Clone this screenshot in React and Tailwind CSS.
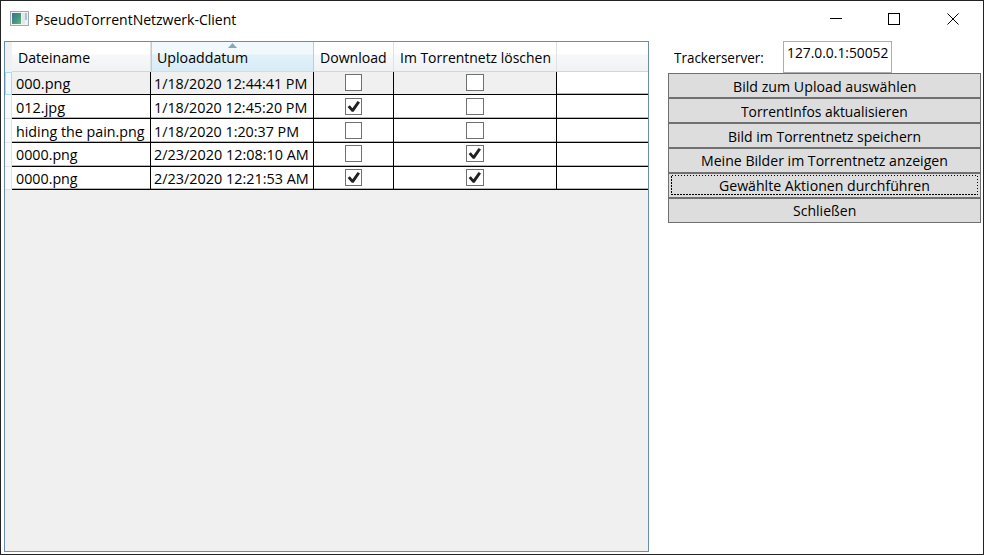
import { useLayoutEffect, useRef, useState } from "react";
import clsx from "clsx";

// Single-line text condensed horizontally to fill a given width.
function Label({ children, width, className }) {
  const ref = useRef(null);
  const [scale, setScale] = useState(1);
  useLayoutEffect(() => {
    setScale(width / ref.current.offsetWidth);
  }, [children, width]);
  return (
    <span className={clsx("block shrink-0 text-[14.5px] leading-5", className)} style={{ width }}>
      <span
        ref={ref}
        className="inline-block origin-left whitespace-pre"
        style={{ transform: `scaleX(${scale})` }}
      >
        {children}
      </span>
    </span>
  );
}

function CheckBox({ checked, wide }) {
  return (
    <span
      className={clsx(
        "block shrink-0 border border-[#707070] bg-white",
        wide ? "w-[18px]" : "w-[17px]",
        "h-[17px]"
      )}
    >
      {checked && (
        <svg viewBox="0 0 15 15" className="block h-[15px] w-[15px]">
          <path d="M1.6 7.9 L3.8 6.3 L6.4 9.2 L11.6 2 L14 3.5 L7.6 12.8 L5.8 12.8 Z" fill="#212121" />
        </svg>
      )}
    </span>
  );
}

const rows = [
  { name: "000.png", nw: 54, date: "1/18/2020 12:44:41 PM", dw: 153, dl: false, del: false, h: "h-[23px]", pad: "pt-[2px]" },
  { name: "012.jpg", nw: 49, date: "1/18/2020 12:45:20 PM", dw: 153, dl: true, del: false, h: "h-6", pad: "pt-[3px]" },
  { name: "hiding the pain.png", nw: 129, date: "1/18/2020 1:20:37 PM", dw: 145, dl: false, del: false, h: "h-6", pad: "pt-[3px]" },
  { name: "0000.png", nw: 62, date: "2/23/2020 12:08:10 AM", dw: 155, dl: false, del: true, h: "h-6", pad: "pt-[2px]" },
  { name: "0000.png", nw: 62, date: "2/23/2020 12:21:53 AM", dw: 155, dl: true, del: true, h: "h-[23px]", pad: "pt-[2px]" },
];

const buttons = [
  ["Bild zum Upload auswählen", 183],
  ["TorrentInfos aktualisieren", 167],
  ["Bild im Torrentnetz speichern", 193],
  ["Meine Bilder im Torrentnetz anzeigen", 247],
  ["Gewählte Aktionen durchführen", 211],
  ["Schließen", 63],
];

const headCell = "h-full border-r border-[#dfe1e4] pt-[6px] pl-[6px]";

function TitleBar() {
  return (
    <header className="flex h-[40px] items-start">
      <svg className="mt-[10px] ml-[9px] h-4 w-[19px]" viewBox="0 0 19 16">
        <defs>
          <linearGradient id="screen" x1="0" y1="0" x2="1" y2="1">
            <stop offset="0" stopColor="#3d6f9b" />
            <stop offset=".55" stopColor="#43967c" />
            <stop offset="1" stopColor="#63b77c" />
          </linearGradient>
        </defs>
        <rect x=".5" y=".5" width="18" height="14" fill="#f2f2f2" stroke="#a5a9ad" />
        <rect x="2" y="2" width="9" height="11" fill="url(#screen)" />
        <rect x="12" y="2" width="3" height="11" fill="#e3e7ea" />
        <rect x="15" y="2" width="2" height="7" fill="#a9c3cf" />
      </svg>
      <Label width={201} className="mt-[9px] ml-[6px]">PseudoTorrentNetzwerk-Client</Label>
      <svg className="mt-[11px] mr-[23px] ml-auto h-[14px] w-[130px]" viewBox="0 0 130 14" fill="none" stroke="black">
        <path d="M0 6.5H12" />
        <rect x="58.5" y="1.5" width="11" height="11" />
        <path d="M117.5 1.5l11 11M128.5 1.5l-11 11" />
      </svg>
    </header>
  );
}

function FileGrid() {
  return (
    <section className="flex h-[511px] w-[645px] flex-col border border-[#688caf] bg-[#f0f0f0]">
      <div className="flex h-[30px] shrink-0">
        <div className="w-[7px] bg-[#f1f1f2]" />
        <div className="flex flex-1 border-b border-[#d5d5d5] bg-linear-to-b from-white from-40% via-[#f7f8fa] via-45% to-[#f1f2f4]">
          <div className={clsx(headCell, "w-[139px]")}>
            <Label width={72}>Dateiname</Label>
          </div>
          <div className="relative h-[30px] w-[163px] border-x border-b border-x-[#96d9f9] border-b-[#c9dfe9] bg-linear-to-b from-[#f2f9fc] from-40% via-[#e1f1f9] via-45% to-[#d8ecf6] pt-[6px] pl-[5px]">
            <Label width={91}>Uploaddatum</Label>
            <svg className="absolute top-[1px] left-[76px] h-[5px] w-[9px]" viewBox="0 0 9 5">
              <path d="M4.5 0L9 5H0Z" fill="#86a9b9" />
            </svg>
          </div>
          <div className={clsx(headCell, "w-[80px]")}>
            <Label width={67}>Download</Label>
          </div>
          <div className={clsx(headCell, "w-[163px]")}>
            <Label width={151}>Im Torrentnetz löschen</Label>
          </div>
        </div>
      </div>
      {rows.map((r, i) => {
        const cell = clsx("flex h-full border-r border-black", i === 0 && "bg-[#f0f0f0]");
        return (
          <div key={i} className={clsx("flex shrink-0 bg-white", r.h)}>
            <div
              className={clsx(
                "w-[7px] border-r border-b",
                i === 0 ? "border border-[#a5dcf5] bg-[#f3fafd]" : "border-[#e4e4e4] bg-[#fafafa]"
              )}
            />
            <div className="flex flex-1 border-b border-black shadow-[inset_0_-1px_0_#b4b4b4]">
              <div className={clsx(cell, "w-[139px] pl-[4px]", r.pad)}>
                <Label width={r.nw}>{r.name}</Label>
              </div>
              <div className={clsx(cell, "w-[163px] pl-[3px]", r.pad)}>
                <Label width={r.dw}>{r.date}</Label>
              </div>
              <div className={clsx(cell, "w-[80px] pl-[31px]", r.pad)}>
                <CheckBox checked={r.dl} />
              </div>
              <div className={clsx(cell, "w-[163px] pl-[72px]", r.pad)}>
                <CheckBox checked={r.del} wide />
              </div>
            </div>
          </div>
        );
      })}
    </section>
  );
}

function SidePanel() {
  return (
    <aside className="ml-[19px] w-[313px]">
      <div className="flex h-8">
        <Label width={90} className="mt-[7px] ml-[6px]">Trackerserver:</Label>
        <div className="ml-auto mr-[89px] h-8 w-[109px] border border-[#abadb3] bg-white pt-px pl-[3px]">
          <Label width={101}>127.0.0.1:50052</Label>
        </div>
      </div>
      {buttons.map(([text, width], i) => (
        <button
          key={text}
          className={clsx(
            "relative flex h-[25px] w-full items-start justify-center border border-[#707070] bg-[#dddddd]",
            i < 3 ? "pt-[3px]" : "pt-[2px]"
          )}
        >
          <Label width={width}>{text}</Label>
          {i === 4 && (
            <svg className="absolute top-px left-[2px] h-5 w-[307px]" viewBox="0 0 307 20" shapeRendering="crispEdges">
              <rect x=".5" y=".5" width="306" height="19" fill="none" stroke="black" strokeDasharray="1.5 1.5" />
            </svg>
          )}
        </button>
      ))}
    </aside>
  );
}

export default function App() {
  return (
    <div className="h-[555px] w-[984px] overflow-hidden border border-[#222222] bg-white font-['Open_Sans','Noto_Sans',sans-serif] text-black">
      <TitleBar />
      <main className="flex pl-[3px]">
        <FileGrid />
        <SidePanel />
      </main>
    </div>
  );
}
